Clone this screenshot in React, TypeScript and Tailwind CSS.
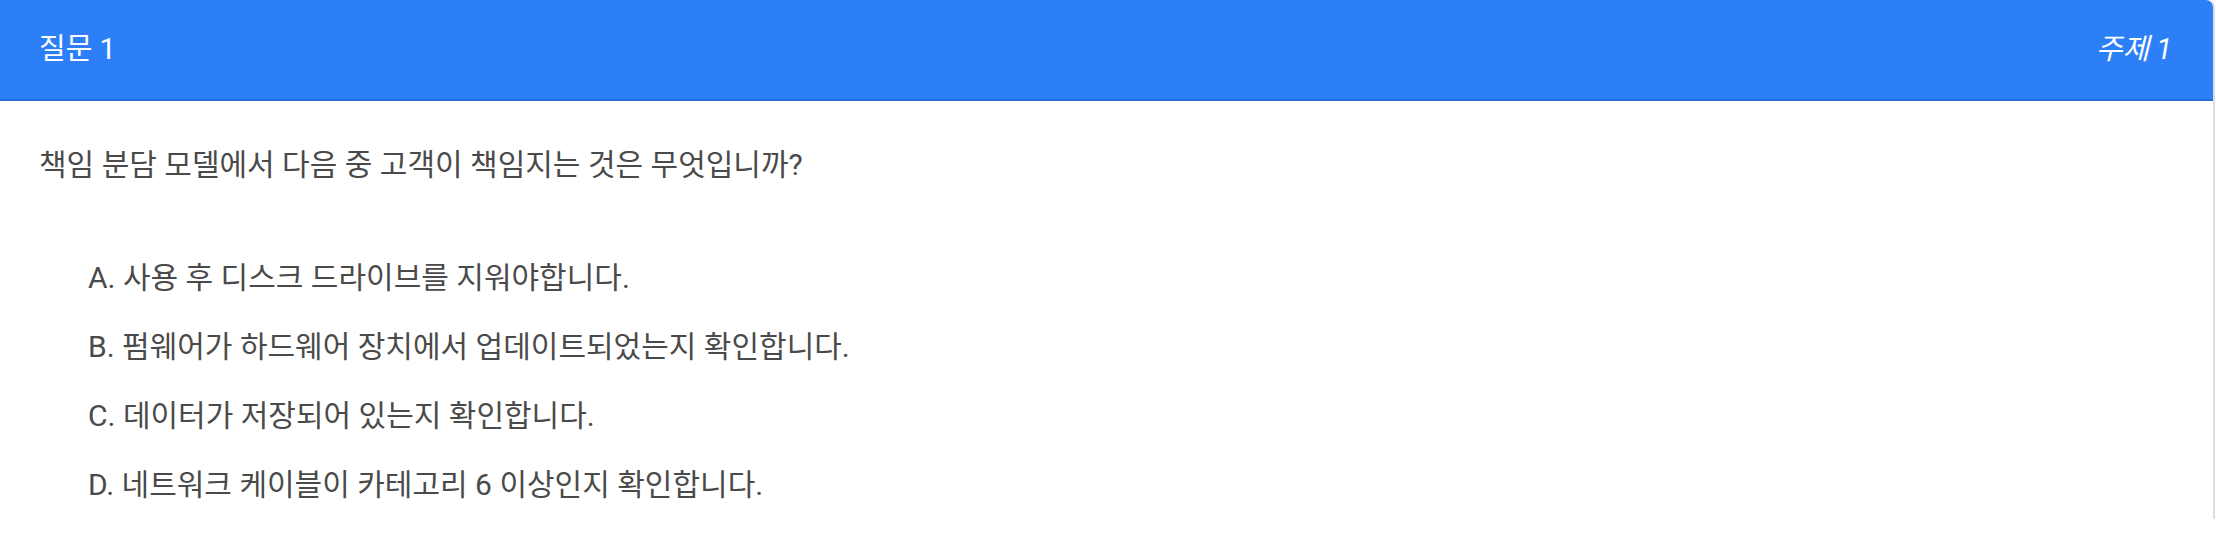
const OPTIONS = [
  { key: 'A', text: '사용 후 디스크 드라이브를 지워야합니다.' },
  { key: 'B', text: '펌웨어가 하드웨어 장치에서 업데이트되었는지 확인합니다.' },
  { key: 'C', text: '데이터가 저장되어 있는지 확인합니다.' },
  { key: 'D', text: '네트워크 케이블이 카테고리 6 이상인지 확인합니다.' },
]

export default function App() {
  return (
    <div
      className="w-full min-h-[544px] bg-white"
      style={{ fontFamily: 'Roboto, "Noto Sans CJK KR", sans-serif' }}
    >
      <div className="w-[2215px] rounded-tr-[7px] border-r-2 border-[#dcdcdc] bg-white">
        {/* Header */}
        <div className="flex h-[101px] items-center justify-between rounded-tr-[7px] border-b-2 border-[#2570dc] bg-[#2c7ff6] pl-[39px] pr-[41px] text-white">
          <span className="text-[29px] leading-none">질문 1</span>
          <span className="text-[29px] italic leading-none">주제 1</span>
        </div>

        {/* Body */}
        <div className="px-[39px] pt-[44px] text-[#4a4a4a]">
          <p className="text-[30px] leading-[40px]">
            책임 분담 모델에서 다음 중 고객이 책임지는 것은 무엇입니까?
          </p>
          <ul className="mt-[58px] pl-[49px]">
            {OPTIONS.map((o) => (
              <li key={o.key} className="h-[69px] text-[30px] leading-[69px]">
                {o.key}. {o.text}
              </li>
            ))}
          </ul>
        </div>
      </div>
    </div>
  )
}
